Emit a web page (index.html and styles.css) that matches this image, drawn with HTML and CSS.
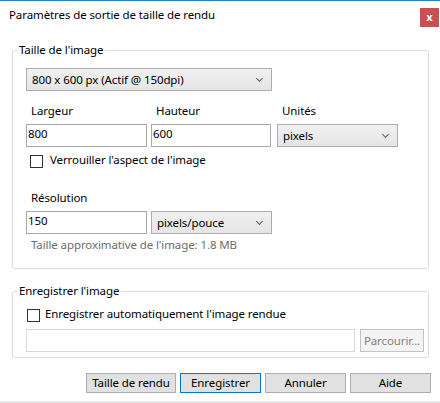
FILE: index.html
```html
<!DOCTYPE html>
<html lang="fr">
<head>
<meta charset="utf-8">
<link rel="stylesheet" href="styles.css">
</head>
<body>
<div class="titlebar">
  <div class="title">Paramètres de sortie de taille de rendu</div>
  <div class="close">x</div>
</div>

<div class="group group-size">
  <div class="legend">Taille de l'image</div>
  <div class="select preset"><span>800 x 600 px (Actif @ 150dpi)</span><span class="chev"></span></div>

  <div class="row labels">
    <div class="lbl c1">Largeur</div>
    <div class="lbl c2">Hauteur</div>
    <div class="lbl c3">Unités</div>
  </div>
  <div class="row fields">
    <div class="input c1">800</div>
    <div class="input c2">600</div>
    <div class="select c3"><span>pixels</span><span class="chev"></span></div>
  </div>
  <div class="check check-lock"><span class="box"></span><span>Verrouiller l'aspect de l'image</span></div>

  <div class="lbl res-label">Résolution</div>
  <div class="row fields">
    <div class="input c1">150</div>
    <div class="select c2 c2wide"><span>pixels/pouce</span><span class="chev"></span></div>
  </div>
  <div class="approx">Taille approximative de l'image: 1.8 MB</div>
</div>

<div class="group group-save">
  <div class="legend">Enregistrer l'image</div>
  <div class="check check-auto"><span class="box"></span><span>Enregistrer automatiquement l'image rendue</span></div>
  <div class="row path-row">
    <div class="input path"></div>
    <div class="btn browse">Parcourir...</div>
  </div>
</div>

<div class="buttons">
  <div class="btn b-size">Taille de rendu</div>
  <div class="btn b-save">Enregistrer</div>
  <div class="btn">Annuler</div>
  <div class="btn">Aide</div>
</div>
<div class="bottom-line"></div>
</body>
</html>
```
FILE: styles.css
```css
* { box-sizing: border-box; }
html, body { margin: 0; padding: 0; background: #fff; }
body {
  width: 440px;
  height: 403px;
  overflow: hidden;
  border-top: 1px solid #1883d7;
  font-family: "Noto Sans", "Segoe UI", sans-serif;
  font-size: 11.5px;
  letter-spacing: -0.1px;
  line-height: 16px;
  color: #000;
}
.titlebar {
  height: 35px;
  display: flex;
  justify-content: space-between;
  align-items: flex-start;
  padding: 0 1px 0 9px;
}
.title { margin-top: 6px; }
.close {
  width: 19px;
  height: 19px;
  margin-top: 7px;
  background: #c75050;
  color: #fff;
  font-weight: bold;
  font-size: 11px;
  line-height: 17px;
  text-align: center;
}
.group {
  position: relative;
  margin: 14px 11px 0 12px;
  border: 1px solid #dcdcdc;
  border-radius: 3px;
  padding: 17px 0 0 13px;
}
.group-size { height: 219px; }
.group-save { height: 67px; margin-top: 22px; padding-top: 14px; }
.legend {
  position: absolute;
  top: -9px;
  left: 4px;
  padding: 0 2px;
  background: #fff;
}
.select {
  height: 23px;
  border: 1px solid #acacac;
  background: linear-gradient(#f0f0f0, #e5e5e5);
  display: flex;
  align-items: center;
  justify-content: space-between;
  padding: 0 9px 0 5px;
}
.preset { width: 246px; }
.chev {
  width: 5px;
  height: 5px;
  border-right: 1px solid #606060;
  border-bottom: 1px solid #606060;
  transform: rotate(45deg);
  margin-top: -3px;
}
.row { display: flex; align-items: flex-start; }
.labels { margin-top: 12px; }
.lbl { padding-left: 5px; }
.c1 { width: 121px; }
.c2 { width: 120px; margin-left: 4px; }
.c2wide { width: 121px; }
.c3 { width: 121px; margin-left: 6px; }
.fields { margin-top: 5px; }
.input {
  height: 23px;
  border: 1px solid #a9a9a9;
  background: #fff;
  padding: 1px 0 0 1px;
}
.check { display: flex; align-items: flex-start; height: 16px; }
.box {
  width: 13px;
  height: 13px;
  border: 1px solid #333;
  background: #fff;
  margin-top: 3px;
  flex: none;
}
.check-lock { margin-top: 5px; padding-left: 4px; }
.check-lock .box { margin-right: 7px; }
.res-label { margin-top: 22px; }
.approx { margin-top: 3px; padding-left: 5px; color: #6d6d6d; }
.check-auto { padding-left: 1px; }
.check-auto .box { margin-right: 5px; }
.path-row { margin-top: 7px; }
.path { width: 329px; border-color: #d9d9d9; }
.btn {
  height: 20px;
  border: 1px solid #adadad;
  background: #e1e1e1;
  text-align: center;
  line-height: 18px;
}
.browse {
  width: 64px;
  height: 23px;
  line-height: 21px;
  margin-left: 5px;
  background: #f4f4f4;
  border-color: #c4c4c4;
  color: #838383;
}
.buttons {
  display: flex;
  justify-content: flex-end;
  gap: 4px;
  padding-right: 9px;
  margin-top: 15px;
}
.buttons .btn { width: 81px; }
.buttons .b-size { width: 90px; }
.buttons .b-save { border-color: #0078d7; }
.bottom-line { margin-top: 8px; height: 2px; background: #e8e8e8; }
```
